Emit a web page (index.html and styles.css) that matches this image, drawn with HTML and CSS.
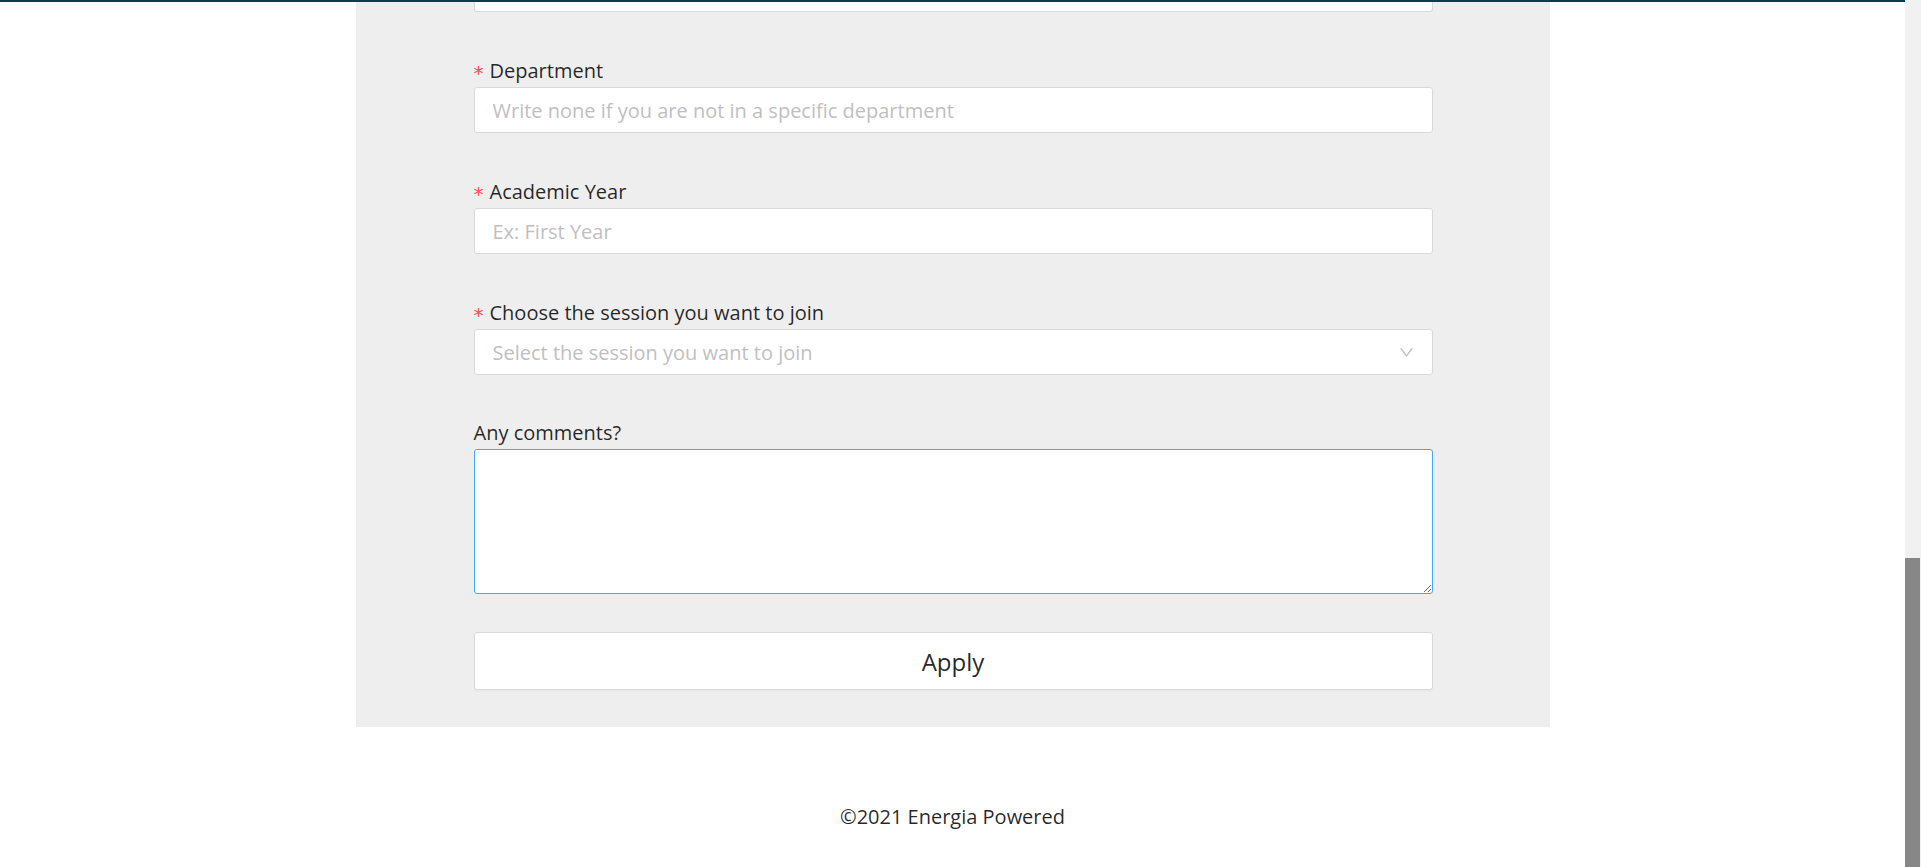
FILE: index.html
```html
<!DOCTYPE html>
<html lang="en">
<head>
<meta charset="utf-8">
<title>Apply</title>
<link rel="stylesheet" href="styles.css">
</head>
<body>
<div class="viewport">
  <div class="page">
    <div class="topline"></div>
    <main class="panel">
      <div class="cut-input"></div>
      <div class="field">
        <label class="label"><span class="req">*</span>Department</label>
        <input class="input" type="text" placeholder="Write none if you are not in a specific department">
      </div>
      <div class="field">
        <label class="label"><span class="req">*</span>Academic Year</label>
        <input class="input" type="text" placeholder="Ex: First Year">
      </div>
      <div class="field">
        <label class="label"><span class="req">*</span>Choose the session you want to join</label>
        <div class="select">
          <span class="select-placeholder">Select the session you want to join</span>
          <svg class="arrow" viewBox="64 64 896 896" width="15" height="15" aria-hidden="true"><path fill="#bfbfbf" d="M884 256h-75c-5.1 0-9.9 2.5-12.9 6.6L512 654.2 227.9 262.6c-3-4.1-7.8-6.6-12.9-6.6h-75c-6.5 0-10.3 7.4-6.5 12.7l352.6 486.1c12.8 17.6 39 17.6 51.7 0l352.6-486.1c3.9-5.3.1-12.7-6.4-12.7z"/></svg>
        </div>
      </div>
      <div class="field field-last">
        <label class="label">Any comments?</label>
        <textarea class="textarea"></textarea>
      </div>
      <button class="apply" type="button">Apply</button>
    </main>
    <footer class="footer">©2021 Energia Powered</footer>
  </div>
  <div class="scrollbar"><div class="thumb"></div></div>
</div>
</body>
</html>
```

FILE: styles.css
```css
* { box-sizing: border-box; }
html, body { margin: 0; padding: 0; background: #fff; }
body {
  font-family: "Open Sans", "Noto Sans", sans-serif;
  color: rgba(0, 0, 0, 0.85);
  overflow: hidden;
}
.viewport {
  display: flex;
  height: 867px;
  overflow: hidden;
}
.page {
  flex: 1;
  position: relative;
  overflow: hidden;
}
.topline {
  position: absolute;
  left: 0; right: 0; top: 0;
  height: 2px;
  background: #03404c;
  z-index: 2;
}
.panel {
  width: 1194px;
  margin: 0 auto;
  background: #eeeeee;
  padding: 0 117px 37px 118px;
}
.cut-input {
  height: 12px;
  background: #fff;
  border: 1px solid #d9d9d9;
  border-top: none;
  border-radius: 0 0 3px 3px;
}
.field {
  margin-top: 44px;
  display: flex;
  flex-direction: column;
}
.field-last { margin-top: 43px; }
.label {
  font-size: 20px;
  line-height: 28px;
  height: 31px;
  padding-top: 1px;
  padding-bottom: 2px;
  display: flex;
  align-items: flex-start;
}
.req {
  color: #ff4d4f;
  font-size: 20px;
  line-height: 22px;
  margin-top: 5px;
  margin-right: 6px;
  font-family: "DejaVu Sans", sans-serif;
}
.input, .select, .textarea {
  width: 100%;
  background: #fff;
  border: 1px solid #d9d9d9;
  border-radius: 3px;
  font-family: inherit;
  font-size: 20px;
  color: rgba(0, 0, 0, 0.85);
}
.input {
  height: 46px;
  padding: 0 18px;
  outline: none;
}
.input::placeholder { color: #bfbfbf; }
.select {
  height: 46px;
  padding: 0 18px 0 18px;
  display: flex;
  align-items: center;
  justify-content: space-between;
}
.select-placeholder { color: #bfbfbf; }
.arrow { display: block; margin-top: 1px; }
.textarea {
  display: block;
  height: 145px;
  border-color: #40a9ff;
  padding: 6px 18px;
  outline: none;
  resize: both;
}
.apply {
  display: block;
  width: 100%;
  height: 58px;
  margin-top: 38px;
  background: #fff;
  border: 1px solid #d9d9d9;
  border-radius: 3px;
  font-family: inherit;
  font-size: 24px;
  color: rgba(0, 0, 0, 0.85);
  box-shadow: 0 2px 0 rgba(0, 0, 0, 0.015);
}
.footer {
  text-align: center;
  font-size: 20px;
  line-height: 28px;
  padding-top: 76px;
  color: rgba(0, 0, 0, 0.85);
}
.scrollbar {
  width: 16px;
  flex: none;
  background: #f1f1f1;
  display: flex;
  flex-direction: column;
  justify-content: flex-end;
}
.thumb {
  height: 309px;
  background: #878787;
  margin-right: 1px;
}
```
